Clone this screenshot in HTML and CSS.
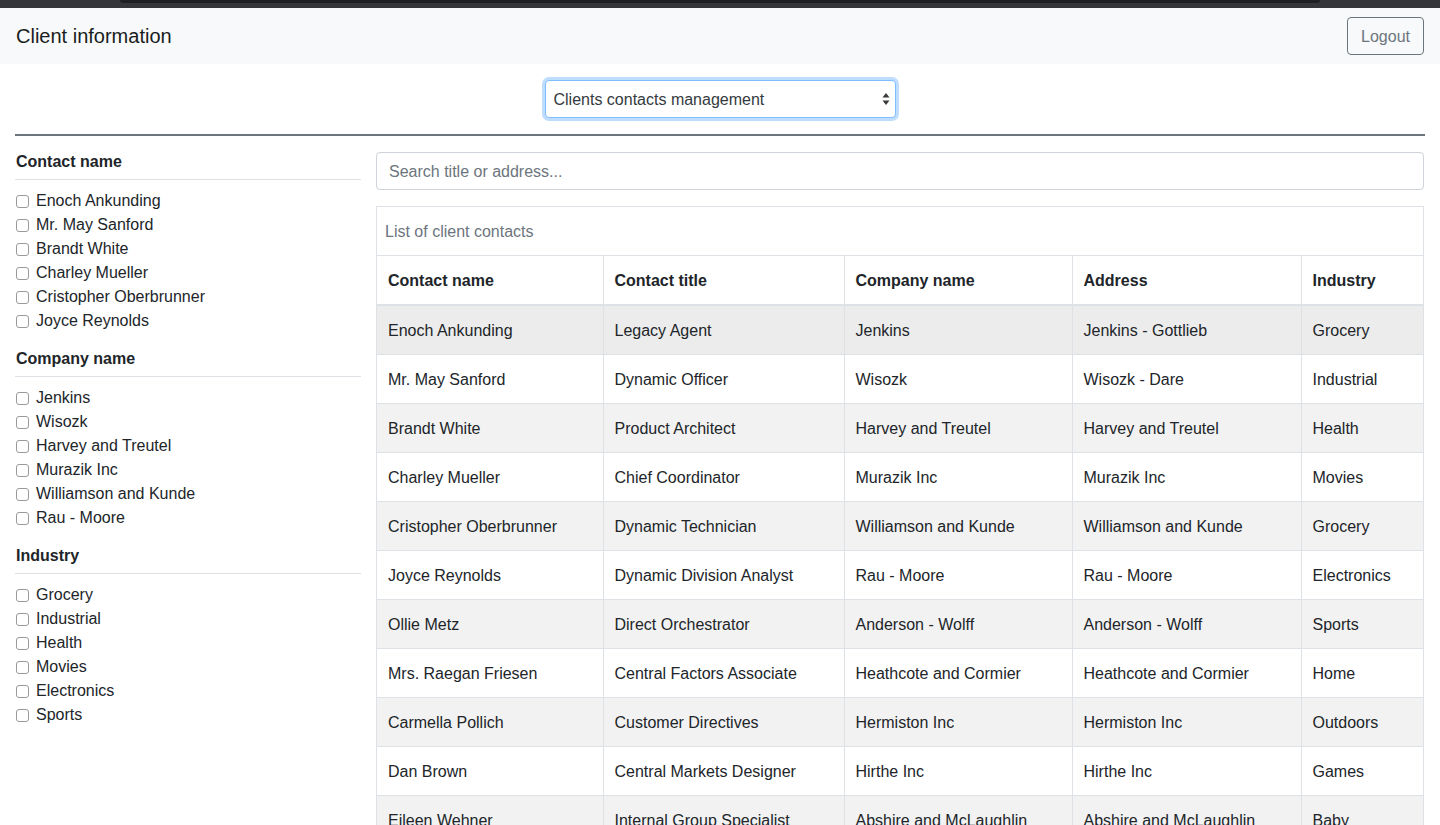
FILE: index.html
```html
<!DOCTYPE html>
<html lang="en">
<head>
<meta charset="utf-8">
<title>Client information</title>
<link rel="stylesheet" href="styles.css">
</head>
<body>
<div class="chrome"><div class="chrome-notch"></div></div>
<nav class="navbar">
  <span class="brand">Client information</span>
  <button class="btn-logout" type="button">Logout</button>
</nav>
<div class="container">
  <div class="select-row">
    <div class="select-wrap">
      <select class="mode-select">
        <option>Clients contacts management</option>
      </select>
      <svg class="select-arrows" width="8" height="14" viewBox="0 0 8 14" aria-hidden="true">
        <path d="M4 1 L7.5 5.5 H0.5 Z" fill="#3a3a3a"/>
        <path d="M4 13 L7.5 8.5 H0.5 Z" fill="#3a3a3a"/>
      </svg>
    </div>
  </div>
  <hr class="divider">
  <div class="layout">
    <aside class="sidebar">
      <h6 class="filter-title">Contact name</h6>
      <ul class="filter-list">
        <li><label><input type="checkbox"> Enoch Ankunding</label></li>
        <li><label><input type="checkbox"> Mr. May Sanford</label></li>
        <li><label><input type="checkbox"> Brandt White</label></li>
        <li><label><input type="checkbox"> Charley Mueller</label></li>
        <li><label><input type="checkbox"> Cristopher Oberbrunner</label></li>
        <li><label><input type="checkbox"> Joyce Reynolds</label></li>
      </ul>
      <h6 class="filter-title">Company name</h6>
      <ul class="filter-list">
        <li><label><input type="checkbox"> Jenkins</label></li>
        <li><label><input type="checkbox"> Wisozk</label></li>
        <li><label><input type="checkbox"> Harvey and Treutel</label></li>
        <li><label><input type="checkbox"> Murazik Inc</label></li>
        <li><label><input type="checkbox"> Williamson and Kunde</label></li>
        <li><label><input type="checkbox"> Rau - Moore</label></li>
      </ul>
      <h6 class="filter-title">Industry</h6>
      <ul class="filter-list">
        <li><label><input type="checkbox"> Grocery</label></li>
        <li><label><input type="checkbox"> Industrial</label></li>
        <li><label><input type="checkbox"> Health</label></li>
        <li><label><input type="checkbox"> Movies</label></li>
        <li><label><input type="checkbox"> Electronics</label></li>
        <li><label><input type="checkbox"> Sports</label></li>
      </ul>
    </aside>
    <main class="main">
      <input class="search" type="text" placeholder="Search title or address...">
      <div class="table-box">
        <div class="caption">List of client contacts</div>
        <table class="contacts">
          <thead>
            <tr>
              <th class="c-name">Contact name</th>
              <th class="c-title">Contact title</th>
              <th class="c-company">Company name</th>
              <th class="c-address">Address</th>
              <th class="c-industry">Industry</th>
            </tr>
          </thead>
          <tbody>
            <tr class="hover"><td>Enoch Ankunding</td><td>Legacy Agent</td><td>Jenkins</td><td>Jenkins - Gottlieb</td><td>Grocery</td></tr>
            <tr><td>Mr. May Sanford</td><td>Dynamic Officer</td><td>Wisozk</td><td>Wisozk - Dare</td><td>Industrial</td></tr>
            <tr><td>Brandt White</td><td>Product Architect</td><td>Harvey and Treutel</td><td>Harvey and Treutel</td><td>Health</td></tr>
            <tr><td>Charley Mueller</td><td>Chief Coordinator</td><td>Murazik Inc</td><td>Murazik Inc</td><td>Movies</td></tr>
            <tr><td>Cristopher Oberbrunner</td><td>Dynamic Technician</td><td>Williamson and Kunde</td><td>Williamson and Kunde</td><td>Grocery</td></tr>
            <tr><td>Joyce Reynolds</td><td>Dynamic Division Analyst</td><td>Rau - Moore</td><td>Rau - Moore</td><td>Electronics</td></tr>
            <tr><td>Ollie Metz</td><td>Direct Orchestrator</td><td>Anderson - Wolff</td><td>Anderson - Wolff</td><td>Sports</td></tr>
            <tr><td>Mrs. Raegan Friesen</td><td>Central Factors Associate</td><td>Heathcote and Cormier</td><td>Heathcote and Cormier</td><td>Home</td></tr>
            <tr><td>Carmella Pollich</td><td>Customer Directives</td><td>Hermiston Inc</td><td>Hermiston Inc</td><td>Outdoors</td></tr>
            <tr><td>Dan Brown</td><td>Central Markets Designer</td><td>Hirthe Inc</td><td>Hirthe Inc</td><td>Games</td></tr>
            <tr><td>Eileen Wehner</td><td>Internal Group Specialist</td><td>Abshire and McLaughlin</td><td>Abshire and McLaughlin</td><td>Baby</td></tr>
          </tbody>
        </table>
      </div>
    </main>
  </div>
</div>
</body>
</html>
```
FILE: styles.css
```css
* { box-sizing: border-box; }

html, body {
  margin: 0;
  padding: 0;
}

body {
  font-family: "Liberation Sans", Arial, sans-serif;
  font-size: 16px;
  line-height: 24px;
  color: #212529;
  background: #fff;
}

.chrome {
  height: 8px;
  background: #35363a;
  display: flex;
  justify-content: center;
}

.chrome-notch {
  width: 1200px;
  height: 3px;
  background: #1f2023;
  border-radius: 0 0 6px 6px;
}

.navbar {
  height: 56px;
  background: #f8f9fa;
  display: flex;
  align-items: center;
  justify-content: space-between;
  padding: 8px 16px;
}

.brand {
  font-size: 20px;
  line-height: 30px;
  color: #1a1d20;
}

.btn-logout {
  font-family: inherit;
  font-size: 16px;
  line-height: 24px;
  height: 38px;
  width: 77px;
  padding: 7px 12px 5px;
  color: #6c757d;
  background: transparent;
  border: 1px solid #6c757d;
  border-radius: 4px;
}

.container {
  padding: 0 15px;
}

.select-row {
  display: flex;
  justify-content: center;
  padding-top: 16px;
}

.select-wrap {
  position: relative;
  width: 351px;
  height: 38px;
}

.mode-select {
  appearance: none;
  -webkit-appearance: none;
  width: 100%;
  height: 38px;
  font-family: inherit;
  font-size: 16px;
  color: #343a40;
  background: #fff;
  border: 1px solid #80bdff;
  border-radius: 4px;
  padding: 6px 24px 6px 8px;
  box-shadow: 0 0 0 3px rgba(0, 123, 255, 0.25);
  outline: none;
}

.select-arrows {
  position: absolute;
  right: 6px;
  top: 12px;
  pointer-events: none;
}

.divider {
  margin: 16px 0;
  border: 0;
  border-top: 2px solid #6c757d;
  height: 0;
}

.layout {
  display: grid;
  grid-template-columns: 346px 1048px;
  column-gap: 15px;
}

.filter-title {
  margin: 0 0 9px;
  padding: 0 0 8px 1px;
  font-size: 16px;
  line-height: 19px;
  font-weight: 700;
  color: #212529;
  border-bottom: 1px solid #dee2e6;
}

.filter-list {
  list-style: none;
  margin: 0 0 16px;
  padding: 0;
}

.filter-list li {
  line-height: 24px;
  height: 24px;
}

.filter-list label {
  display: flex;
  align-items: center;
  color: #212529;
}

.filter-list input[type="checkbox"] {
  appearance: none;
  -webkit-appearance: none;
  width: 13px;
  height: 13px;
  margin: 0 7px 0 1px;
  border: 1px solid #9a9a9a;
  border-radius: 3px;
  background: #fff;
}

.search {
  display: block;
  width: 100%;
  height: 38px;
  padding: 7px 12px 5px;
  font-family: inherit;
  font-size: 16px;
  color: #495057;
  border: 1px solid #ced4da;
  border-radius: 4px;
  margin-bottom: 16px;
  outline: none;
}

.search::placeholder {
  color: #6c757d;
}

.table-box {
  border: 1px solid #dee2e6;
  width: 1048px;
}

.caption {
  padding: 13px 8px 11px;
  line-height: 24px;
  color: #6c757d;
  border-bottom: 1px solid #dee2e6;
}

.contacts {
  width: 100%;
  border-collapse: collapse;
  table-layout: fixed;
}

.contacts th,
.contacts td {
  padding: 13px 11px 11px;
  line-height: 24px;
  text-align: left;
  vertical-align: top;
  border-left: 1px solid #dee2e6;
  border-top: 1px solid #dee2e6;
  white-space: nowrap;
  overflow: hidden;
}

.contacts th:first-child,
.contacts td:first-child {
  border-left: 0;
}

.contacts thead th {
  border-top: 0;
  border-bottom: 2px solid #dee2e6;
  font-weight: 700;
  height: 48px;
}

.contacts .c-name { width: 226px; }
.contacts .c-title { width: 241px; }
.contacts .c-company { width: 228px; }
.contacts .c-address { width: 229px; }

.contacts tbody tr:nth-child(odd) {
  background: #f2f2f2;
}

.contacts tbody tr.hover {
  background: #ececec;
}

.contacts tbody tr:first-child td {
  border-top: 0;
}
```
